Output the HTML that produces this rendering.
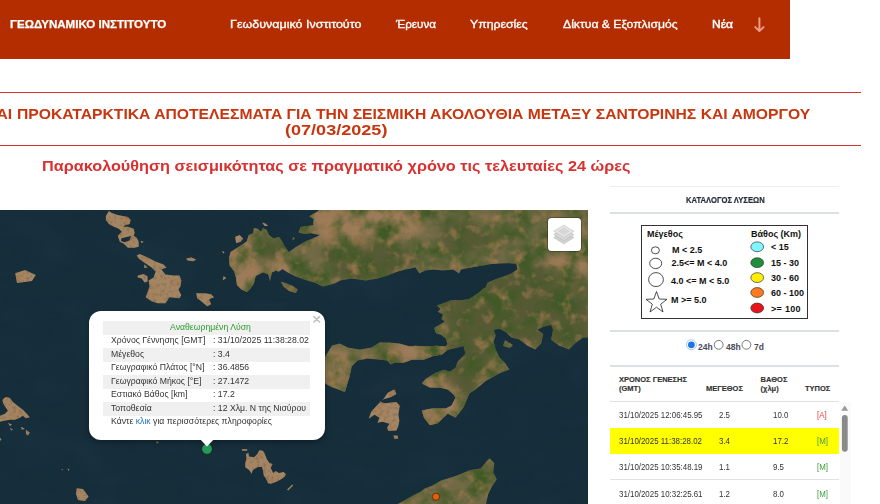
<!DOCTYPE html>
<html><head><meta charset="utf-8">
<style>
*{margin:0;padding:0;box-sizing:border-box}
html,body{width:880px;height:504px;overflow:hidden;background:#fff;font-family:"Liberation Sans",sans-serif}
.abs{position:absolute;white-space:nowrap;transform-origin:0 0}
#hdr{left:0;top:0;width:790px;height:58.5px;background:#b32d00}
.logo{left:10px;top:17.5px;color:#fff;font-weight:bold;font-size:11px;-webkit-text-stroke:0.25px #fff}
.nav{top:19px;color:#fff;font-size:10px;-webkit-text-stroke:0.3px #fff}
.rline{left:0;width:861px;height:1.25px;background:#d93232}
.t1{color:#c8360f;font-weight:bold;font-size:14px}
.t2{color:#d93030;font-weight:bold;font-size:14px}
#map{left:0;top:210px;width:589px;height:294px;background:#172b3a;overflow:hidden}
.lg{font-size:9px;font-weight:bold;color:#111}
.rd{font-size:8.5px;font-weight:bold;color:#4a4a5a;margin-top:0.8px}
.th{font-size:7.5px;font-weight:bold;color:#333;margin-top:1px;-webkit-text-stroke:0.15px #333}
.td{font-size:8.5px;color:#333;transform:scaleX(0.93);margin-top:-0.7px}
.pp{font-size:9.5px;color:#333;line-height:13.5px;margin-top:-1.3px;transform:scaleX(0.913)}
</style></head><body>
<div id="hdr" class="abs">
  <div class="abs logo" style="transform:scaleX(1.051)">ΓΕΩΔΥΝΑΜΙΚΟ ΙΝΣΤΙΤΟΥΤΟ</div>
  <div class="abs nav" style="left:230px;transform:scaleX(1.25)">Γεωδυναμικό Ινστιτούτο</div>
  <div class="abs nav" style="left:396px;transform:scaleX(1.17)">Έρευνα</div>
  <div class="abs nav" style="left:470px;transform:scaleX(1.23)">Υπηρεσίες</div>
  <div class="abs nav" style="left:563px;transform:scaleX(1.218)">Δίκτυα &amp; Εξοπλισμός</div>
  <div class="abs nav" style="left:711.5px;-webkit-text-stroke:0.45px #fff;transform:scaleX(1.2)">Νέα</div>
  <svg class="abs" style="left:750px;top:14px" width="20" height="22" viewBox="750 14 20 22"><path d="M759.4 18.2V30.6M755.3 27.1L759.4 31.1L763.5 27.1" fill="none" stroke="#ea9c86" stroke-width="2" stroke-linecap="round" stroke-linejoin="round"/></svg>
</div>
<div class="abs rline" style="top:91.9px"></div>
<div class="abs rline" style="top:144.9px"></div>
<div class="abs t1" style="right:868px;top:105.5px;transform:scaleX(1.12);transform-origin:100% 0">ΚΑΙ</div>
<div class="abs t1" style="left:17px;top:105.5px;transform:scaleX(1.12)">ΠΡΟΚΑΤΑΡΚΤΙΚΑ ΑΠΟΤΕΛΕΣΜΑΤΑ ΓΙΑ ΤΗΝ ΣΕΙΣΜΙΚΗ ΑΚΟΛΟΥΘΙΑ ΜΕΤΑΞΥ ΣΑΝΤΟΡΙΝΗΣ ΚΑΙ ΑΜΟΡΓΟΥ</div>
<div class="abs t1" style="left:285px;top:122px;transform:scaleX(1.29)">(07/03/2025)</div>
<div class="abs t2" style="left:42px;top:157.7px;transform:scaleX(1.159)">Παρακολούθηση σεισμικότητας σε πραγματικό χρόνο τις τελευταίες 24 ώρες</div>
<!--MAP-->
<svg class="abs" style="left:0;top:209.5px" width="588.4" height="294" viewBox="0 210 588.4 294">
<defs><filter id="tg" x="0" y="210" width="589" height="294" filterUnits="userSpaceOnUse" color-interpolation-filters="sRGB"><feTurbulence type="fractalNoise" baseFrequency="0.045" numOctaves="4" seed="7" result="n"/><feColorMatrix in="n" values="0 0 0 0 0.25  0 0 0 0 0.35  0 0 0 0 0.15  2.8 0 0 0 -1.12" result="g"/><feComposite in="g" in2="SourceGraphic" operator="in"/></filter><filter id="tt" x="0" y="210" width="589" height="294" filterUnits="userSpaceOnUse" color-interpolation-filters="sRGB"><feTurbulence type="fractalNoise" baseFrequency="0.08" numOctaves="3" seed="11" result="n"/><feColorMatrix in="n" values="0 0 0 0 0.64  0 0 0 0 0.48  0 0 0 0 0.32  0 2.4 0 0 -1.25" result="g"/><feComposite in="g" in2="SourceGraphic" operator="in"/></filter><filter id="to" x="0" y="210" width="589" height="294" filterUnits="userSpaceOnUse" color-interpolation-filters="sRGB"><feTurbulence type="fractalNoise" baseFrequency="0.015 0.03" numOctaves="3" seed="4" result="n"/><feColorMatrix in="n" values="0 0 0 0 0.11  0 0 0 0 0.22  0 0 0 0 0.27  1.0 0 0 0 -0.4" result="g"/><feComposite in="g" in2="SourceGraphic" operator="in"/></filter><filter id="td" x="0" y="210" width="589" height="294" filterUnits="userSpaceOnUse" color-interpolation-filters="sRGB"><feTurbulence type="fractalNoise" baseFrequency="0.3" numOctaves="2" seed="21" result="n"/><feColorMatrix in="n" values="0 0 0 0 0.5  0 0 0 0 0.4  0 0 0 0 0.29  0 0 1.8 0 -0.85" result="g"/><feComposite in="g" in2="SourceGraphic" operator="in"/></filter></defs>
<rect x="0" y="210" width="588.4" height="294" fill="#162d3a"/>
<rect x="0" y="210" width="588.4" height="294" fill="#000" filter="url(#to)"/>
<polygon points="589.0,210.0 589.0,337.6 582.9,337.6 574.9,343.6 569.0,349.5 559.0,345.6 551.1,339.6 553.1,329.7 551.1,324.7 543.2,326.7 537.2,329.7 543.2,333.7 541.2,343.6 535.2,349.5 527.3,345.6 519.4,339.6 511.4,337.6 505.5,331.7 499.5,328.7 493.6,329.7 495.6,335.6 493.6,341.6 495.6,349.5 499.5,357.5 505.5,363.4 509.4,369.4 499.5,373.3 485.6,381.3 475.5,389.6 469.5,393.5 463.5,407.4 455.6,417.4 447.7,413.4 437.7,423.3 429.8,425.3 423.8,417.4 421.8,410.4 431.8,408.4 445.7,408.4 451.6,405.5 455.6,397.5 453.6,394.5 447.7,389.6 439.7,387.6 429.8,387.6 421.8,383.6 425.8,378.7 435.7,372.7 444.1,369.7 449.6,371.7 455.6,367.7 457.6,361.8 465.5,353.8 463.5,345.9 451.6,348.9 447.7,349.9 441.7,354.8 433.8,355.8 423.8,359.8 411.9,359.8 403.0,363.0 395.4,362.4 390.4,364.4 387.5,360.4 377.5,359.4 367.6,358.5 357.7,360.4 351.7,366.4 349.8,375.3 345.8,389.2 344.8,391.9 339.8,390.0 331.9,387.0 328.0,385.0 320.0,380.0 320.0,357.0 325.0,357.5 331.9,345.6 339.8,343.6 347.8,347.5 359.7,349.5 371.6,347.5 379.5,342.6 389.4,342.6 399.4,343.6 410.0,346.6 415.4,345.7 426.1,346.6 436.8,345.7 445.7,346.6 447.5,343.9 445.7,338.6 441.3,335.0 435.9,333.2 434.1,327.9 438.6,325.2 444.8,321.6 441.3,318.9 443.0,314.5 437.7,311.8 440.4,309.1 436.8,305.5 443.9,302.9 451.1,300.2 460.0,300.2 468.9,299.3 474.3,295.7 479.6,292.1 482.7,289.0 485.6,287.4 487.6,282.4 497.5,278.5 503.5,276.5 511.4,273.5 517.4,269.5 516.4,263.6 505.5,263.2 491.6,264.0 482.9,265.6 471.0,267.5 461.0,269.5 459.0,273.5 453.1,269.5 443.2,270.5 433.3,269.5 425.3,270.5 419.4,273.5 415.4,267.5 405.5,269.5 397.5,271.5 387.6,275.5 377.7,278.5 365.8,280.4 351.9,278.5 340.0,280.4 334.9,283.4 323.0,286.4 316.4,283.2 303.9,279.6 295.0,276.1 287.9,272.5 282.5,268.9 278.9,271.6 275.4,270.7 271.8,272.5 270.0,281.4 268.2,274.3 262.9,272.5 255.7,276.1 253.9,283.2 250.4,288.6 246.8,292.1 241.4,289.5 237.0,285.0 236.1,277.9 234.3,271.6 229.8,265.4 228.9,258.2 230.7,252.0 236.1,248.4 243.2,243.9 246.8,241.3 248.6,235.0 253.0,233.2 253.9,227.9 257.5,228.8 261.1,231.4 262.9,227.9 266.4,229.6 269.1,235.0 273.6,238.6 278.9,236.8 281.6,240.4 284.3,245.7 288.8,252.0 295.0,247.5 305.7,241.3 316.4,236.8 320.0,235.0 311.1,233.2 303.9,234.1 298.6,232.3 300.4,227.0 307.5,226.1 312.9,225.2 313.8,218.9 309.3,216.3 317.3,211.8 319.1,210.0" fill="#716a45"/>
<polygon points="280.7,281.4 286.1,283.2 293.2,285.9 297.7,289.5 295.9,293.0 289.6,291.3 283.4,286.8" fill="#716a45"/>
<polygon points="293.0,236.8 295.0,238.6 292.3,240.4" fill="#716a45"/>
<polygon points="398.0,504.0 413.9,495.0 420.0,491.9 424.8,488.6 431.9,485.7 436.7,482.9 441.0,480.5 456.2,475.7 470.7,470.0 480.8,468.6 487.2,460.6 489.6,458.2 494.3,463.0 493.2,472.4 496.7,479.5 492.0,486.6 487.9,495.0 486.1,504.0" fill="#716a45"/>
<polygon points="505.0,340.0 513.0,345.0 510.0,348.0 503.0,346.0" fill="#716a45"/>
<polygon points="105.9,215.9 108.9,211.0 111.9,213.0 114.9,214.0 117.8,214.9 122.8,215.9 127.8,216.9 130.7,219.9 129.7,223.9 125.8,224.9 122.8,226.8 127.8,226.8 133.7,228.8 134.7,232.8 133.7,235.8 136.7,237.7 138.7,241.7 138.7,246.7 134.7,247.7 127.8,247.7 123.8,243.7 119.8,241.7 117.8,235.8 121.8,231.8 118.8,228.8 113.9,226.8 108.9,223.9 105.9,219.9" fill="#a58664"/>
<polygon points="136.7,255.6 139.7,254.0 147.6,257.6 155.6,261.6 163.5,264.6 166.5,267.5 161.5,269.5 165.5,274.5 173.4,275.5 179.4,275.5 181.3,280.4 180.4,286.4 178.4,289.4 181.3,295.3 179.4,298.3 169.4,297.3 165.5,303.3 157.5,303.3 151.6,301.3 145.6,297.3 147.6,292.3 149.6,286.4 148.6,280.4 153.6,277.5 155.6,271.5 151.6,267.5 145.6,263.6 138.7,258.6" fill="#a58664"/>
<polygon points="137.7,275.5 143.7,273.9 147.6,276.5 147.6,281.4 144.6,282.4 141.7,278.5 137.7,277.5" fill="#a58664"/>
<polygon points="186.3,258.6 191.3,257.6 196.2,259.6 193.3,261.2 187.3,260.6" fill="#a58664"/>
<polygon points="196.2,293.3 205.2,293.3 211.1,294.3 214.1,297.3 209.1,299.3 211.1,304.2 207.1,306.2 201.2,301.3 197.2,298.3" fill="#a58664"/>
<polygon points="15.3,273.2 25.0,270.0 35.8,275.0 32.0,281.0 17.0,283.0" fill="#a58664"/>
<polygon points="3.0,398.9 6.0,396.9 9.9,397.9 12.9,401.9 17.9,405.9 22.8,409.8 26.8,413.8 29.8,417.3 25.8,418.3 22.8,415.8 19.8,417.8 14.9,419.8 9.9,419.8 4.0,420.8 0.0,421.7 0.0,415.8 5.0,413.8 7.9,410.8 4.0,404.9 2.5,400.9" fill="#a58664"/>
<polygon points="245.9,454.0 248.4,452.7 249.1,456.5 254.1,457.2 257.3,454.0 259.2,450.2 263.0,450.8 264.9,454.0 266.8,459.1 269.4,462.9 272.6,464.1 270.7,468.0 273.2,473.0 275.7,471.1 278.9,473.0 281.5,472.4 283.4,471.8 285.9,474.3 284.6,476.8 280.8,479.4 275.7,481.9 270.7,483.8 268.1,483.2 265.6,478.1 263.7,475.6 263.0,470.5 261.8,466.7 257.3,467.3 252.9,469.9 251.6,473.7 249.1,469.9 245.2,467.3 245.2,462.9 246.5,459.1" fill="#a58664"/>
<polygon points="242.1,448.9 247.2,449.2 247.2,450.8 242.1,450.8" fill="#a58664"/>
<polygon points="287.2,489.6 292.3,484.5 293.2,485.5 288.2,490.6" fill="#a58664"/>
<polygon points="8.0,423.0 12.0,424.5 10.0,426.0" fill="#a58664"/>
<polygon points="10.0,427.7 13.0,429.7 11.0,430.5" fill="#a58664"/>
<polygon points="20.8,426.7 24.8,428.7 22.0,429.7" fill="#a58664"/>
<polygon points="25.8,429.7 29.8,432.6 28.0,435.6 26.0,434.0" fill="#a58664"/>
<polygon points="61.5,468.8 63.0,469.5 62.0,470.5" fill="#a58664"/>
<polygon points="67.5,468.5 69.5,469.5 68.5,471.0" fill="#a58664"/>
<polygon points="0.0,438.0 1.5,439.0 0.0,441.0" fill="#a58664"/>
<polygon points="156.0,441.5 159.0,442.0 157.0,443.5" fill="#a58664"/>
<polygon points="76.7,488.3 83.0,489.0 88.6,496.6 85.0,501.0 78.0,500.0 76.0,494.0" fill="#a58664"/>
<polygon points="387.5,392.9 394.4,389.4 396.4,393.9 390.4,397.3 384.5,398.9 379.5,401.9 385.5,403.3 396.4,401.9 399.8,405.8 398.4,414.8 399.4,420.7 398.4,425.7 396.4,430.6 388.5,431.0 387.1,427.7 389.4,423.7 382.5,421.7 377.5,422.7 379.5,417.7 374.6,414.8 368.6,418.7 371.2,411.8 377.5,404.8 383.5,398.9" fill="#a58664"/>
<polygon points="393.4,435.6 397.4,435.6 398.4,438.6 394.4,439.0" fill="#a58664"/>
<polygon points="235.2,236.8 239.6,235.0 243.2,238.6 240.5,242.1 236.1,243.0" fill="#a58664"/>
<polygon points="221.8,251.0 224.5,252.0 223.6,253.8" fill="#a58664"/>
<polygon points="223.6,276.0 226.3,277.9 222.7,280.5" fill="#a58664"/>
<polygon points="140.6,240.7 143.6,241.7 141.6,243.2" fill="#a58664"/>
<polygon points="144.6,264.5 147.6,267.5 144.0,268.0" fill="#a58664"/>
<polygon points="262.0,222.5 265.5,223.4 268.2,226.1 264.6,226.1" fill="#a58664"/>
<defs><clipPath id="lc"><polygon points="589.0,210.0 589.0,337.6 582.9,337.6 574.9,343.6 569.0,349.5 559.0,345.6 551.1,339.6 553.1,329.7 551.1,324.7 543.2,326.7 537.2,329.7 543.2,333.7 541.2,343.6 535.2,349.5 527.3,345.6 519.4,339.6 511.4,337.6 505.5,331.7 499.5,328.7 493.6,329.7 495.6,335.6 493.6,341.6 495.6,349.5 499.5,357.5 505.5,363.4 509.4,369.4 499.5,373.3 485.6,381.3 475.5,389.6 469.5,393.5 463.5,407.4 455.6,417.4 447.7,413.4 437.7,423.3 429.8,425.3 423.8,417.4 421.8,410.4 431.8,408.4 445.7,408.4 451.6,405.5 455.6,397.5 453.6,394.5 447.7,389.6 439.7,387.6 429.8,387.6 421.8,383.6 425.8,378.7 435.7,372.7 444.1,369.7 449.6,371.7 455.6,367.7 457.6,361.8 465.5,353.8 463.5,345.9 451.6,348.9 447.7,349.9 441.7,354.8 433.8,355.8 423.8,359.8 411.9,359.8 403.0,363.0 395.4,362.4 390.4,364.4 387.5,360.4 377.5,359.4 367.6,358.5 357.7,360.4 351.7,366.4 349.8,375.3 345.8,389.2 344.8,391.9 339.8,390.0 331.9,387.0 328.0,385.0 320.0,380.0 320.0,357.0 325.0,357.5 331.9,345.6 339.8,343.6 347.8,347.5 359.7,349.5 371.6,347.5 379.5,342.6 389.4,342.6 399.4,343.6 410.0,346.6 415.4,345.7 426.1,346.6 436.8,345.7 445.7,346.6 447.5,343.9 445.7,338.6 441.3,335.0 435.9,333.2 434.1,327.9 438.6,325.2 444.8,321.6 441.3,318.9 443.0,314.5 437.7,311.8 440.4,309.1 436.8,305.5 443.9,302.9 451.1,300.2 460.0,300.2 468.9,299.3 474.3,295.7 479.6,292.1 482.7,289.0 485.6,287.4 487.6,282.4 497.5,278.5 503.5,276.5 511.4,273.5 517.4,269.5 516.4,263.6 505.5,263.2 491.6,264.0 482.9,265.6 471.0,267.5 461.0,269.5 459.0,273.5 453.1,269.5 443.2,270.5 433.3,269.5 425.3,270.5 419.4,273.5 415.4,267.5 405.5,269.5 397.5,271.5 387.6,275.5 377.7,278.5 365.8,280.4 351.9,278.5 340.0,280.4 334.9,283.4 323.0,286.4 316.4,283.2 303.9,279.6 295.0,276.1 287.9,272.5 282.5,268.9 278.9,271.6 275.4,270.7 271.8,272.5 270.0,281.4 268.2,274.3 262.9,272.5 255.7,276.1 253.9,283.2 250.4,288.6 246.8,292.1 241.4,289.5 237.0,285.0 236.1,277.9 234.3,271.6 229.8,265.4 228.9,258.2 230.7,252.0 236.1,248.4 243.2,243.9 246.8,241.3 248.6,235.0 253.0,233.2 253.9,227.9 257.5,228.8 261.1,231.4 262.9,227.9 266.4,229.6 269.1,235.0 273.6,238.6 278.9,236.8 281.6,240.4 284.3,245.7 288.8,252.0 295.0,247.5 305.7,241.3 316.4,236.8 320.0,235.0 311.1,233.2 303.9,234.1 298.6,232.3 300.4,227.0 307.5,226.1 312.9,225.2 313.8,218.9 309.3,216.3 317.3,211.8 319.1,210.0"/></clipPath><filter id="bl" x="-20%" y="-20%" width="140%" height="140%"><feGaussianBlur stdDeviation="3"/></filter></defs>
<g clip-path="url(#lc)"><g filter="url(#bl)" fill="#9c7b58">
<polygon points="418.0,380.0 450.0,372.0 462.0,395.0 455.0,420.0 430.0,428.0 418.0,410.0"/>
<polygon points="322.0,350.0 350.0,352.0 352.0,395.0 325.0,390.0"/>
<polygon points="395.0,342.0 440.0,346.0 440.0,358.0 400.0,362.0"/>
<polygon points="225.0,250.0 248.0,236.0 258.0,246.0 256.0,266.0 262.0,270.0 252.0,295.0 232.0,290.0"/>
<polygon points="262.0,258.0 288.0,262.0 296.0,278.0 268.0,275.0"/>
<polygon points="305.0,208.0 400.0,208.0 425.0,232.0 385.0,242.0 345.0,234.0 322.0,242.0"/>
<polygon points="330.0,240.0 360.0,232.0 372.0,250.0 345.0,262.0"/>
<polygon points="540.0,262.0 575.0,250.0 589.0,262.0 589.0,300.0 560.0,290.0"/>
<polygon points="395.0,300.0 420.0,310.0 425.0,330.0 400.0,325.0"/>
</g></g>
<g clip-path="url(#lc)"><g filter="url(#bl)" fill="#44512b" opacity="0.6">
<polygon points="440.0,300.0 520.0,280.0 589.0,300.0 589.0,340.0 560.0,350.0 500.0,340.0 470.0,400.0 440.0,380.0 450.0,340.0"/>
<polygon points="470.0,270.0 540.0,265.0 589.0,275.0 589.0,300.0 520.0,290.0 480.0,300.0"/>
<polygon points="320.0,250.0 360.0,240.0 400.0,245.0 420.0,262.0 380.0,278.0 340.0,282.0"/>
<polygon points="255.0,240.0 280.0,240.0 288.0,255.0 270.0,262.0 258.0,255.0"/>
<polygon points="440.0,225.0 470.0,220.0 500.0,240.0 470.0,255.0 445.0,250.0"/>
</g></g>
<g filter="url(#tg)">
<polygon points="589.0,210.0 589.0,337.6 582.9,337.6 574.9,343.6 569.0,349.5 559.0,345.6 551.1,339.6 553.1,329.7 551.1,324.7 543.2,326.7 537.2,329.7 543.2,333.7 541.2,343.6 535.2,349.5 527.3,345.6 519.4,339.6 511.4,337.6 505.5,331.7 499.5,328.7 493.6,329.7 495.6,335.6 493.6,341.6 495.6,349.5 499.5,357.5 505.5,363.4 509.4,369.4 499.5,373.3 485.6,381.3 475.5,389.6 469.5,393.5 463.5,407.4 455.6,417.4 447.7,413.4 437.7,423.3 429.8,425.3 423.8,417.4 421.8,410.4 431.8,408.4 445.7,408.4 451.6,405.5 455.6,397.5 453.6,394.5 447.7,389.6 439.7,387.6 429.8,387.6 421.8,383.6 425.8,378.7 435.7,372.7 444.1,369.7 449.6,371.7 455.6,367.7 457.6,361.8 465.5,353.8 463.5,345.9 451.6,348.9 447.7,349.9 441.7,354.8 433.8,355.8 423.8,359.8 411.9,359.8 403.0,363.0 395.4,362.4 390.4,364.4 387.5,360.4 377.5,359.4 367.6,358.5 357.7,360.4 351.7,366.4 349.8,375.3 345.8,389.2 344.8,391.9 339.8,390.0 331.9,387.0 328.0,385.0 320.0,380.0 320.0,357.0 325.0,357.5 331.9,345.6 339.8,343.6 347.8,347.5 359.7,349.5 371.6,347.5 379.5,342.6 389.4,342.6 399.4,343.6 410.0,346.6 415.4,345.7 426.1,346.6 436.8,345.7 445.7,346.6 447.5,343.9 445.7,338.6 441.3,335.0 435.9,333.2 434.1,327.9 438.6,325.2 444.8,321.6 441.3,318.9 443.0,314.5 437.7,311.8 440.4,309.1 436.8,305.5 443.9,302.9 451.1,300.2 460.0,300.2 468.9,299.3 474.3,295.7 479.6,292.1 482.7,289.0 485.6,287.4 487.6,282.4 497.5,278.5 503.5,276.5 511.4,273.5 517.4,269.5 516.4,263.6 505.5,263.2 491.6,264.0 482.9,265.6 471.0,267.5 461.0,269.5 459.0,273.5 453.1,269.5 443.2,270.5 433.3,269.5 425.3,270.5 419.4,273.5 415.4,267.5 405.5,269.5 397.5,271.5 387.6,275.5 377.7,278.5 365.8,280.4 351.9,278.5 340.0,280.4 334.9,283.4 323.0,286.4 316.4,283.2 303.9,279.6 295.0,276.1 287.9,272.5 282.5,268.9 278.9,271.6 275.4,270.7 271.8,272.5 270.0,281.4 268.2,274.3 262.9,272.5 255.7,276.1 253.9,283.2 250.4,288.6 246.8,292.1 241.4,289.5 237.0,285.0 236.1,277.9 234.3,271.6 229.8,265.4 228.9,258.2 230.7,252.0 236.1,248.4 243.2,243.9 246.8,241.3 248.6,235.0 253.0,233.2 253.9,227.9 257.5,228.8 261.1,231.4 262.9,227.9 266.4,229.6 269.1,235.0 273.6,238.6 278.9,236.8 281.6,240.4 284.3,245.7 288.8,252.0 295.0,247.5 305.7,241.3 316.4,236.8 320.0,235.0 311.1,233.2 303.9,234.1 298.6,232.3 300.4,227.0 307.5,226.1 312.9,225.2 313.8,218.9 309.3,216.3 317.3,211.8 319.1,210.0" fill="#000"/>
<polygon points="280.7,281.4 286.1,283.2 293.2,285.9 297.7,289.5 295.9,293.0 289.6,291.3 283.4,286.8" fill="#000"/>
<polygon points="293.0,236.8 295.0,238.6 292.3,240.4" fill="#000"/>
<polygon points="398.0,504.0 413.9,495.0 420.0,491.9 424.8,488.6 431.9,485.7 436.7,482.9 441.0,480.5 456.2,475.7 470.7,470.0 480.8,468.6 487.2,460.6 489.6,458.2 494.3,463.0 493.2,472.4 496.7,479.5 492.0,486.6 487.9,495.0 486.1,504.0" fill="#000"/>
<polygon points="505.0,340.0 513.0,345.0 510.0,348.0 503.0,346.0" fill="#000"/>
</g>
<g filter="url(#tt)">
<polygon points="589.0,210.0 589.0,337.6 582.9,337.6 574.9,343.6 569.0,349.5 559.0,345.6 551.1,339.6 553.1,329.7 551.1,324.7 543.2,326.7 537.2,329.7 543.2,333.7 541.2,343.6 535.2,349.5 527.3,345.6 519.4,339.6 511.4,337.6 505.5,331.7 499.5,328.7 493.6,329.7 495.6,335.6 493.6,341.6 495.6,349.5 499.5,357.5 505.5,363.4 509.4,369.4 499.5,373.3 485.6,381.3 475.5,389.6 469.5,393.5 463.5,407.4 455.6,417.4 447.7,413.4 437.7,423.3 429.8,425.3 423.8,417.4 421.8,410.4 431.8,408.4 445.7,408.4 451.6,405.5 455.6,397.5 453.6,394.5 447.7,389.6 439.7,387.6 429.8,387.6 421.8,383.6 425.8,378.7 435.7,372.7 444.1,369.7 449.6,371.7 455.6,367.7 457.6,361.8 465.5,353.8 463.5,345.9 451.6,348.9 447.7,349.9 441.7,354.8 433.8,355.8 423.8,359.8 411.9,359.8 403.0,363.0 395.4,362.4 390.4,364.4 387.5,360.4 377.5,359.4 367.6,358.5 357.7,360.4 351.7,366.4 349.8,375.3 345.8,389.2 344.8,391.9 339.8,390.0 331.9,387.0 328.0,385.0 320.0,380.0 320.0,357.0 325.0,357.5 331.9,345.6 339.8,343.6 347.8,347.5 359.7,349.5 371.6,347.5 379.5,342.6 389.4,342.6 399.4,343.6 410.0,346.6 415.4,345.7 426.1,346.6 436.8,345.7 445.7,346.6 447.5,343.9 445.7,338.6 441.3,335.0 435.9,333.2 434.1,327.9 438.6,325.2 444.8,321.6 441.3,318.9 443.0,314.5 437.7,311.8 440.4,309.1 436.8,305.5 443.9,302.9 451.1,300.2 460.0,300.2 468.9,299.3 474.3,295.7 479.6,292.1 482.7,289.0 485.6,287.4 487.6,282.4 497.5,278.5 503.5,276.5 511.4,273.5 517.4,269.5 516.4,263.6 505.5,263.2 491.6,264.0 482.9,265.6 471.0,267.5 461.0,269.5 459.0,273.5 453.1,269.5 443.2,270.5 433.3,269.5 425.3,270.5 419.4,273.5 415.4,267.5 405.5,269.5 397.5,271.5 387.6,275.5 377.7,278.5 365.8,280.4 351.9,278.5 340.0,280.4 334.9,283.4 323.0,286.4 316.4,283.2 303.9,279.6 295.0,276.1 287.9,272.5 282.5,268.9 278.9,271.6 275.4,270.7 271.8,272.5 270.0,281.4 268.2,274.3 262.9,272.5 255.7,276.1 253.9,283.2 250.4,288.6 246.8,292.1 241.4,289.5 237.0,285.0 236.1,277.9 234.3,271.6 229.8,265.4 228.9,258.2 230.7,252.0 236.1,248.4 243.2,243.9 246.8,241.3 248.6,235.0 253.0,233.2 253.9,227.9 257.5,228.8 261.1,231.4 262.9,227.9 266.4,229.6 269.1,235.0 273.6,238.6 278.9,236.8 281.6,240.4 284.3,245.7 288.8,252.0 295.0,247.5 305.7,241.3 316.4,236.8 320.0,235.0 311.1,233.2 303.9,234.1 298.6,232.3 300.4,227.0 307.5,226.1 312.9,225.2 313.8,218.9 309.3,216.3 317.3,211.8 319.1,210.0" fill="#000"/>
<polygon points="280.7,281.4 286.1,283.2 293.2,285.9 297.7,289.5 295.9,293.0 289.6,291.3 283.4,286.8" fill="#000"/>
<polygon points="293.0,236.8 295.0,238.6 292.3,240.4" fill="#000"/>
<polygon points="398.0,504.0 413.9,495.0 420.0,491.9 424.8,488.6 431.9,485.7 436.7,482.9 441.0,480.5 456.2,475.7 470.7,470.0 480.8,468.6 487.2,460.6 489.6,458.2 494.3,463.0 493.2,472.4 496.7,479.5 492.0,486.6 487.9,495.0 486.1,504.0" fill="#000"/>
<polygon points="505.0,340.0 513.0,345.0 510.0,348.0 503.0,346.0" fill="#000"/>
<polygon points="105.9,215.9 108.9,211.0 111.9,213.0 114.9,214.0 117.8,214.9 122.8,215.9 127.8,216.9 130.7,219.9 129.7,223.9 125.8,224.9 122.8,226.8 127.8,226.8 133.7,228.8 134.7,232.8 133.7,235.8 136.7,237.7 138.7,241.7 138.7,246.7 134.7,247.7 127.8,247.7 123.8,243.7 119.8,241.7 117.8,235.8 121.8,231.8 118.8,228.8 113.9,226.8 108.9,223.9 105.9,219.9" fill="#000"/>
<polygon points="136.7,255.6 139.7,254.0 147.6,257.6 155.6,261.6 163.5,264.6 166.5,267.5 161.5,269.5 165.5,274.5 173.4,275.5 179.4,275.5 181.3,280.4 180.4,286.4 178.4,289.4 181.3,295.3 179.4,298.3 169.4,297.3 165.5,303.3 157.5,303.3 151.6,301.3 145.6,297.3 147.6,292.3 149.6,286.4 148.6,280.4 153.6,277.5 155.6,271.5 151.6,267.5 145.6,263.6 138.7,258.6" fill="#000"/>
<polygon points="137.7,275.5 143.7,273.9 147.6,276.5 147.6,281.4 144.6,282.4 141.7,278.5 137.7,277.5" fill="#000"/>
<polygon points="186.3,258.6 191.3,257.6 196.2,259.6 193.3,261.2 187.3,260.6" fill="#000"/>
<polygon points="196.2,293.3 205.2,293.3 211.1,294.3 214.1,297.3 209.1,299.3 211.1,304.2 207.1,306.2 201.2,301.3 197.2,298.3" fill="#000"/>
<polygon points="15.3,273.2 25.0,270.0 35.8,275.0 32.0,281.0 17.0,283.0" fill="#000"/>
<polygon points="3.0,398.9 6.0,396.9 9.9,397.9 12.9,401.9 17.9,405.9 22.8,409.8 26.8,413.8 29.8,417.3 25.8,418.3 22.8,415.8 19.8,417.8 14.9,419.8 9.9,419.8 4.0,420.8 0.0,421.7 0.0,415.8 5.0,413.8 7.9,410.8 4.0,404.9 2.5,400.9" fill="#000"/>
<polygon points="245.9,454.0 248.4,452.7 249.1,456.5 254.1,457.2 257.3,454.0 259.2,450.2 263.0,450.8 264.9,454.0 266.8,459.1 269.4,462.9 272.6,464.1 270.7,468.0 273.2,473.0 275.7,471.1 278.9,473.0 281.5,472.4 283.4,471.8 285.9,474.3 284.6,476.8 280.8,479.4 275.7,481.9 270.7,483.8 268.1,483.2 265.6,478.1 263.7,475.6 263.0,470.5 261.8,466.7 257.3,467.3 252.9,469.9 251.6,473.7 249.1,469.9 245.2,467.3 245.2,462.9 246.5,459.1" fill="#000"/>
<polygon points="242.1,448.9 247.2,449.2 247.2,450.8 242.1,450.8" fill="#000"/>
<polygon points="287.2,489.6 292.3,484.5 293.2,485.5 288.2,490.6" fill="#000"/>
<polygon points="8.0,423.0 12.0,424.5 10.0,426.0" fill="#000"/>
<polygon points="10.0,427.7 13.0,429.7 11.0,430.5" fill="#000"/>
<polygon points="20.8,426.7 24.8,428.7 22.0,429.7" fill="#000"/>
<polygon points="25.8,429.7 29.8,432.6 28.0,435.6 26.0,434.0" fill="#000"/>
<polygon points="61.5,468.8 63.0,469.5 62.0,470.5" fill="#000"/>
<polygon points="67.5,468.5 69.5,469.5 68.5,471.0" fill="#000"/>
<polygon points="0.0,438.0 1.5,439.0 0.0,441.0" fill="#000"/>
<polygon points="156.0,441.5 159.0,442.0 157.0,443.5" fill="#000"/>
<polygon points="76.7,488.3 83.0,489.0 88.6,496.6 85.0,501.0 78.0,500.0 76.0,494.0" fill="#000"/>
<polygon points="387.5,392.9 394.4,389.4 396.4,393.9 390.4,397.3 384.5,398.9 379.5,401.9 385.5,403.3 396.4,401.9 399.8,405.8 398.4,414.8 399.4,420.7 398.4,425.7 396.4,430.6 388.5,431.0 387.1,427.7 389.4,423.7 382.5,421.7 377.5,422.7 379.5,417.7 374.6,414.8 368.6,418.7 371.2,411.8 377.5,404.8 383.5,398.9" fill="#000"/>
<polygon points="393.4,435.6 397.4,435.6 398.4,438.6 394.4,439.0" fill="#000"/>
<polygon points="235.2,236.8 239.6,235.0 243.2,238.6 240.5,242.1 236.1,243.0" fill="#000"/>
<polygon points="221.8,251.0 224.5,252.0 223.6,253.8" fill="#000"/>
<polygon points="223.6,276.0 226.3,277.9 222.7,280.5" fill="#000"/>
<polygon points="140.6,240.7 143.6,241.7 141.6,243.2" fill="#000"/>
<polygon points="144.6,264.5 147.6,267.5 144.0,268.0" fill="#000"/>
<polygon points="262.0,222.5 265.5,223.4 268.2,226.1 264.6,226.1" fill="#000"/>
</g>
<g filter="url(#td)">
<polygon points="105.9,215.9 108.9,211.0 111.9,213.0 114.9,214.0 117.8,214.9 122.8,215.9 127.8,216.9 130.7,219.9 129.7,223.9 125.8,224.9 122.8,226.8 127.8,226.8 133.7,228.8 134.7,232.8 133.7,235.8 136.7,237.7 138.7,241.7 138.7,246.7 134.7,247.7 127.8,247.7 123.8,243.7 119.8,241.7 117.8,235.8 121.8,231.8 118.8,228.8 113.9,226.8 108.9,223.9 105.9,219.9" fill="#000"/>
<polygon points="136.7,255.6 139.7,254.0 147.6,257.6 155.6,261.6 163.5,264.6 166.5,267.5 161.5,269.5 165.5,274.5 173.4,275.5 179.4,275.5 181.3,280.4 180.4,286.4 178.4,289.4 181.3,295.3 179.4,298.3 169.4,297.3 165.5,303.3 157.5,303.3 151.6,301.3 145.6,297.3 147.6,292.3 149.6,286.4 148.6,280.4 153.6,277.5 155.6,271.5 151.6,267.5 145.6,263.6 138.7,258.6" fill="#000"/>
<polygon points="137.7,275.5 143.7,273.9 147.6,276.5 147.6,281.4 144.6,282.4 141.7,278.5 137.7,277.5" fill="#000"/>
<polygon points="186.3,258.6 191.3,257.6 196.2,259.6 193.3,261.2 187.3,260.6" fill="#000"/>
<polygon points="196.2,293.3 205.2,293.3 211.1,294.3 214.1,297.3 209.1,299.3 211.1,304.2 207.1,306.2 201.2,301.3 197.2,298.3" fill="#000"/>
<polygon points="15.3,273.2 25.0,270.0 35.8,275.0 32.0,281.0 17.0,283.0" fill="#000"/>
<polygon points="3.0,398.9 6.0,396.9 9.9,397.9 12.9,401.9 17.9,405.9 22.8,409.8 26.8,413.8 29.8,417.3 25.8,418.3 22.8,415.8 19.8,417.8 14.9,419.8 9.9,419.8 4.0,420.8 0.0,421.7 0.0,415.8 5.0,413.8 7.9,410.8 4.0,404.9 2.5,400.9" fill="#000"/>
<polygon points="245.9,454.0 248.4,452.7 249.1,456.5 254.1,457.2 257.3,454.0 259.2,450.2 263.0,450.8 264.9,454.0 266.8,459.1 269.4,462.9 272.6,464.1 270.7,468.0 273.2,473.0 275.7,471.1 278.9,473.0 281.5,472.4 283.4,471.8 285.9,474.3 284.6,476.8 280.8,479.4 275.7,481.9 270.7,483.8 268.1,483.2 265.6,478.1 263.7,475.6 263.0,470.5 261.8,466.7 257.3,467.3 252.9,469.9 251.6,473.7 249.1,469.9 245.2,467.3 245.2,462.9 246.5,459.1" fill="#000"/>
<polygon points="242.1,448.9 247.2,449.2 247.2,450.8 242.1,450.8" fill="#000"/>
<polygon points="287.2,489.6 292.3,484.5 293.2,485.5 288.2,490.6" fill="#000"/>
<polygon points="8.0,423.0 12.0,424.5 10.0,426.0" fill="#000"/>
<polygon points="10.0,427.7 13.0,429.7 11.0,430.5" fill="#000"/>
<polygon points="20.8,426.7 24.8,428.7 22.0,429.7" fill="#000"/>
<polygon points="25.8,429.7 29.8,432.6 28.0,435.6 26.0,434.0" fill="#000"/>
<polygon points="61.5,468.8 63.0,469.5 62.0,470.5" fill="#000"/>
<polygon points="67.5,468.5 69.5,469.5 68.5,471.0" fill="#000"/>
<polygon points="0.0,438.0 1.5,439.0 0.0,441.0" fill="#000"/>
<polygon points="156.0,441.5 159.0,442.0 157.0,443.5" fill="#000"/>
<polygon points="76.7,488.3 83.0,489.0 88.6,496.6 85.0,501.0 78.0,500.0 76.0,494.0" fill="#000"/>
<polygon points="387.5,392.9 394.4,389.4 396.4,393.9 390.4,397.3 384.5,398.9 379.5,401.9 385.5,403.3 396.4,401.9 399.8,405.8 398.4,414.8 399.4,420.7 398.4,425.7 396.4,430.6 388.5,431.0 387.1,427.7 389.4,423.7 382.5,421.7 377.5,422.7 379.5,417.7 374.6,414.8 368.6,418.7 371.2,411.8 377.5,404.8 383.5,398.9" fill="#000"/>
<polygon points="393.4,435.6 397.4,435.6 398.4,438.6 394.4,439.0" fill="#000"/>
<polygon points="235.2,236.8 239.6,235.0 243.2,238.6 240.5,242.1 236.1,243.0" fill="#000"/>
<polygon points="221.8,251.0 224.5,252.0 223.6,253.8" fill="#000"/>
<polygon points="223.6,276.0 226.3,277.9 222.7,280.5" fill="#000"/>
<polygon points="140.6,240.7 143.6,241.7 141.6,243.2" fill="#000"/>
<polygon points="144.6,264.5 147.6,267.5 144.0,268.0" fill="#000"/>
<polygon points="262.0,222.5 265.5,223.4 268.2,226.1 264.6,226.1" fill="#000"/>
</g>
<polygon points="121.5,238.2 131,235.9 129.5,240.6 124.5,242.2 121,241" fill="#162d3a"/>
<circle cx="436" cy="496.7" r="3.6" fill="#e0600f" stroke="#4a2a10" stroke-width="0.8"/>
</svg>
<!--/MAP-->
<svg class="abs" style="left:199px;top:441px" width="16" height="16" viewBox="199 441 16 16"><circle cx="207" cy="449" r="5.4" fill="#28995a" stroke="#0d2a1c" stroke-width="0.9"/></svg>

<div class="abs" style="left:547.5px;top:217.5px;width:33px;height:33px;border-radius:3.5px;background:#fff;box-shadow:0 0 0 1px rgba(0,0,0,0.25)"></div>
<svg class="abs" style="left:548px;top:218px" width="32" height="32" viewBox="548 218 32 32">
 <polygon points="563.8,231.5 573.8,237.6 563.8,243.8 553.8,237.6" fill="#d2d2d2" stroke="#bdbdbd" stroke-width="0.7"/>
 <polygon points="563.8,228.6 573.8,234.6 563.8,240.8 553.8,234.6" fill="#d8d8d8" stroke="#bdbdbd" stroke-width="0.7"/>
 <polygon points="563.8,225.2 573.8,231.2 563.8,237.3 553.8,231.2" fill="#e6e6e6" stroke="#c4c4c4" stroke-width="0.7"/>
 <polygon points="563.8,227.6 569.8,231.2 563.8,234.9 557.8,231.2" fill="#d6d6d6"/>
</svg>


<div class="abs" style="left:610px;top:186px;width:229px;height:1px;background:#eceef1"></div>
<div class="abs lt" style="left:685.5px;top:194.5px;font-size:8.6px;font-weight:bold;color:#2a2d3a;transform:scaleX(0.89);-webkit-text-stroke:0.2px #2a2d3a">ΚΑΤΑΛΟΓΟΣ ΛΥΣΕΩΝ</div>
<div class="abs" style="left:610px;top:212px;width:229px;height:2px;background:#dcdfe4"></div>
<div class="abs" style="left:641px;top:225px;width:167px;height:94px;border:1px solid #333;background:#fff"></div>
<div class="abs lg" style="left:647px;top:229px">Μέγεθος</div>
<div class="abs lg" style="left:751px;top:229px">Βάθος (Km)</div>
<svg class="abs" style="left:636px;top:220px" width="180" height="104" viewBox="636 220 180 104">
 <g fill="#fff" stroke="#222" stroke-width="0.8">
  <ellipse cx="655.4" cy="250.3" rx="4" ry="3.5"/>
  <ellipse cx="655.7" cy="263.4" rx="6" ry="5.2"/>
  <ellipse cx="656" cy="279.6" rx="7.4" ry="7"/>
  <polygon points="656.5,291.5 659.2,299 667,299.3 660.7,304.2 663,312 656.5,307.2 650,312 652.3,304.2 646,299.3 653.8,299"/>
 </g>
 <g stroke="#333" stroke-width="0.7">
  <ellipse cx="757.2" cy="246.8" rx="6.4" ry="4.9" fill="#7ff5ff"/>
  <ellipse cx="757.2" cy="262.7" rx="6.4" ry="4.9" fill="#1f8f3c"/>
  <ellipse cx="757.2" cy="277.6" rx="6.4" ry="4.9" fill="#ffee00"/>
  <ellipse cx="757.2" cy="292.5" rx="6.4" ry="4.9" fill="#ff7a1f"/>
  <ellipse cx="757.2" cy="308" rx="6.4" ry="4.9" fill="#e8141c"/>
 </g>
</svg>
<div class="abs lg" style="left:672px;top:245px">M &lt; 2.5</div>
<div class="abs lg" style="left:671.5px;top:258px">2.5&lt;= M &lt; 4.0</div>
<div class="abs lg" style="left:671px;top:276px">4.0 &lt;= M &lt; 5.0</div>
<div class="abs lg" style="left:671px;top:295px">M &gt;= 5.0</div>
<div class="abs lg" style="left:771px;top:242px">&lt; 15</div>
<div class="abs lg" style="left:771px;top:258px">15 - 30</div>
<div class="abs lg" style="left:771px;top:273px">30 - 60</div>
<div class="abs lg" style="left:771px;top:288px">60 - 100</div>
<div class="abs lg" style="left:771px;top:304px;letter-spacing:0.3px">&gt;= 100</div>
<div class="abs" style="left:610px;top:330px;width:229px;height:2px;background:#dcdfe4"></div>
<svg class="abs" style="left:680px;top:336px" width="80" height="18" viewBox="680 336 80 18">
 <circle cx="691.4" cy="344.8" r="4.2" fill="#1a73e8" stroke="#fff" stroke-width="1.6"/>
 <circle cx="691.4" cy="344.8" r="5" fill="none" stroke="#8ab8f5" stroke-width="0.8"/>
 <circle cx="718.7" cy="344.8" r="4.4" fill="#fff" stroke="#555" stroke-width="0.8"/>
 <circle cx="746.4" cy="344.8" r="4.4" fill="#fff" stroke="#555" stroke-width="0.8"/>
</svg>
<div class="abs rd" style="left:698px;top:341px">24h</div>
<div class="abs rd" style="left:726px;top:341px">48h</div>
<div class="abs rd" style="left:754px;top:341px">7d</div>
<div class="abs" style="left:610px;top:365px;width:229px;height:2px;background:#dcdfe4"></div>
<div class="abs th" style="left:619px;top:375px;line-height:8.6px">ΧΡΟΝΟΣ ΓΕΝΕΣΗΣ<br>(GMT)</div>
<div class="abs th" style="left:706px;top:383.6px;line-height:8.6px">ΜΕΓΕΘΟΣ</div>
<div class="abs th" style="left:760.6px;top:375px;line-height:8.6px">ΒΑΘΟΣ<br>(χλμ)</div>
<div class="abs th" style="left:805px;top:383.6px;line-height:8.6px">ΤΥΠΟΣ</div>
<div class="abs" style="left:610px;top:401px;width:229px;height:1px;background:#dee2e6"></div>
<div class="abs" style="left:610px;top:428px;width:229px;height:25.5px;background:#ffff00"></div>
<div class="abs" style="left:610px;top:479px;width:229px;height:1px;background:#dee2e6"></div>
<div class="abs td" style="left:619px;top:411px">31/10/2025 12:06:45.95</div><div class="abs td" style="left:718.6px;top:411px">2.5</div><div class="abs td" style="left:772.7px;top:411px">10.0</div><div class="abs td" style="left:817px;top:411px;color:#e8393b">[A]</div>
<div class="abs td" style="left:619px;top:436.5px">31/10/2025 11:38:28.02</div><div class="abs td" style="left:718.6px;top:436.5px">3.4</div><div class="abs td" style="left:772.7px;top:436.5px">17.2</div><div class="abs td" style="left:817px;top:436.5px;color:#3a9a3a">[M]</div>
<div class="abs td" style="left:619px;top:463px">31/10/2025 10:35:48.19</div><div class="abs td" style="left:718.6px;top:463px">1.1</div><div class="abs td" style="left:772.7px;top:463px">9.5</div><div class="abs td" style="left:817px;top:463px;color:#3a9a3a">[M]</div>
<div class="abs td" style="left:619px;top:489.5px">31/10/2025 10:32:25.61</div><div class="abs td" style="left:718.6px;top:489.5px">1.2</div><div class="abs td" style="left:772.7px;top:489.5px">8.0</div><div class="abs td" style="left:817px;top:489.5px;color:#3a9a3a">[M]</div>
<div class="abs" style="left:840px;top:402px;width:11px;height:102px;background:#fafafa"></div>
<svg class="abs" style="left:840px;top:402px" width="11" height="60" viewBox="840 402 11 60">
 <polygon points="844.7,405.6 848.2,410.8 841.2,410.8" fill="#9a9a9a"/>
 <rect x="841.9" y="414.9" width="5.8" height="36.8" rx="2.9" fill="#8a8a8a"/>
</svg>

<div class="abs" style="left:88.7px;top:310.5px;width:236px;height:129px;background:#fff;border-radius:12px;box-shadow:0 2px 5px rgba(0,0,0,0.35)"></div>
<svg class="abs" style="left:190px;top:436px" width="34" height="14" viewBox="190 436 34 14"><polygon points="199,438 215,438 207,446.6" fill="#fff"/></svg>
<div class="abs" style="left:103px;top:321px;width:206.5px;height:13.5px;background:#f0f0f0"></div>
<div class="abs pp" style="left:169.5px;top:321px;color:#2e9a2e">Αναθεωρημένη Λύση</div>
<div class="abs pp" style="left:110.6px;top:334.5px">Χρόνος Γέννησης [GMT]</div><div class="abs pp" style="left:212.5px;top:334.5px">: 31/10/2025 11:38:28.02</div>
<div class="abs" style="left:103px;top:348.0px;width:206.5px;height:13.5px;background:#f0f0f0"></div>
<div class="abs pp" style="left:110.6px;top:348.0px">Μέγεθος</div><div class="abs pp" style="left:212.5px;top:348.0px">: 3.4</div>
<div class="abs pp" style="left:110.6px;top:361.5px">Γεωγραφικό Πλάτος [°N]</div><div class="abs pp" style="left:212.5px;top:361.5px">: 36.4856</div>
<div class="abs" style="left:103px;top:375.0px;width:206.5px;height:13.5px;background:#f0f0f0"></div>
<div class="abs pp" style="left:110.6px;top:375.0px">Γεωγραφικό Μήκος [°E]</div><div class="abs pp" style="left:212.5px;top:375.0px">: 27.1472</div>
<div class="abs pp" style="left:110.6px;top:388.5px">Εστιακό Βάθος [km]</div><div class="abs pp" style="left:212.5px;top:388.5px">: 17.2</div>
<div class="abs" style="left:103px;top:402.0px;width:206.5px;height:13.5px;background:#f0f0f0"></div>
<div class="abs pp" style="left:110.6px;top:402.0px">Τοποθεσία</div><div class="abs pp" style="left:212.5px;top:402.0px">: 12 Χλμ. Ν της Νισύρου</div>
<div class="abs pp" style="left:110.6px;top:415.5px">Κάντε <span style="color:#2573b5">κλικ</span> για περισσότερες πληροφορίες</div>
<svg class="abs" style="left:310px;top:313px" width="14" height="12" viewBox="310 313 14 12"><path d="M313.9 316.7L319.5 322M319.5 316.7L313.9 322" stroke="#c0c0c0" stroke-width="1.6" stroke-linecap="round"/></svg>
</body></html>
